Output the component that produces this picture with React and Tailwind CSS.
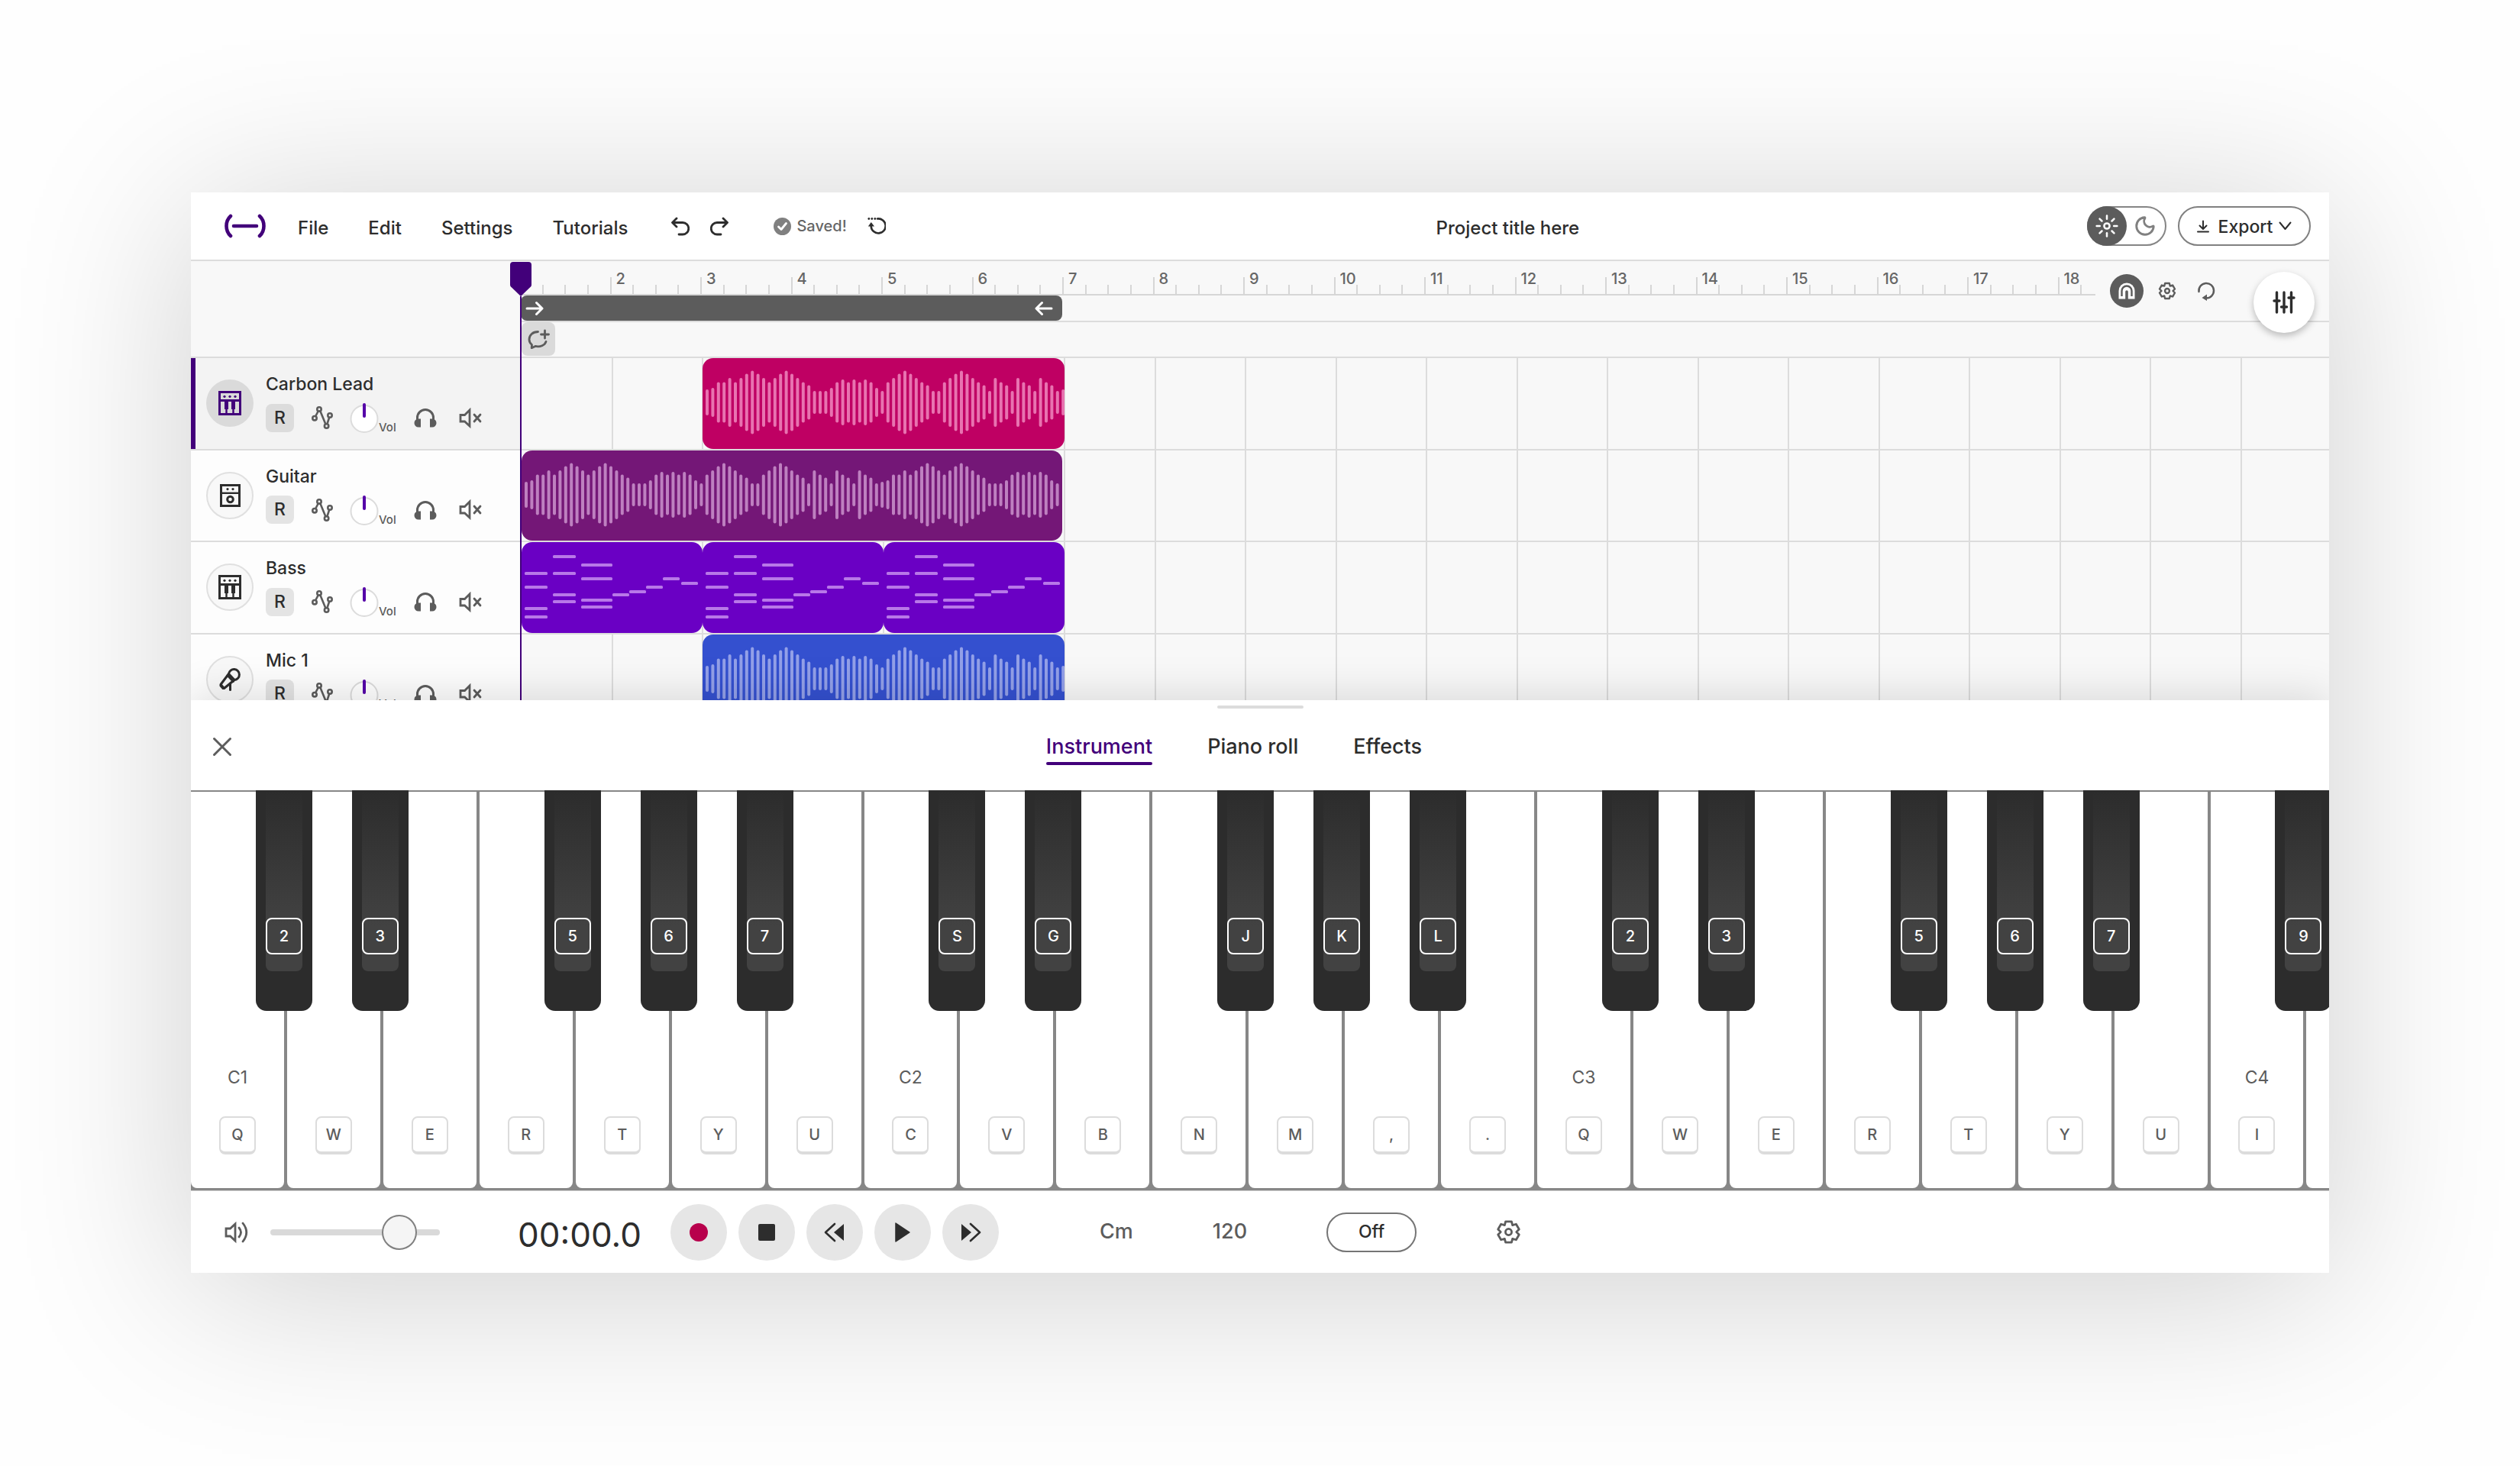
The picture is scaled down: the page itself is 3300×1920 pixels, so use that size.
import React from "react";
import { Moon } from "lucide-react";

const LEVELS = [
  34, 38, 53, 53, 64, 53, 64, 75, 83, 75, 64, 53, 64, 75, 83, 75, 64, 53, 45, 30, 30, 30, 38, 53, 60, 53, 60, 53, 60,
  53, 38, 30, 53, 64, 75, 83, 75, 64, 53, 45, 30, 30, 53, 64, 75, 83, 75, 64, 53, 45, 30, 64, 53, 45, 30, 64, 53, 45,
  30, 64, 53, 45, 30,
];

const NOTES = [
  [4, 41, 30], [4, 59, 30], [4, 87, 30], [4, 98, 30],
  [41, 19, 30], [41, 41, 30], [41, 69, 30], [41, 78, 30],
  [78, 30, 41], [78, 48, 41], [78, 76, 41], [78, 85, 41],
  [119, 69, 22], [141, 65, 22], [163, 59, 22], [185, 48, 22], [209, 54, 22],
];

const WHITE_KEYS = [
  { k: "Q", n: "C1", b: "2" }, { k: "W", b: "3" }, { k: "E" }, { k: "R", b: "5" }, { k: "T", b: "6" },
  { k: "Y", b: "7" }, { k: "U" },
  { k: "C", n: "C2", b: "S" }, { k: "V", b: "G" }, { k: "B" }, { k: "N", b: "J" }, { k: "M", b: "K" },
  { k: ",", b: "L" }, { k: "." },
  { k: "Q", n: "C3", b: "2" }, { k: "W", b: "3" }, { k: "E" }, { k: "R", b: "5" }, { k: "T", b: "6" },
  { k: "Y", b: "7" }, { k: "U" },
  { k: "I", n: "C4", b: "9" }, {},
];

const TRACKS = [
  { name: "Carbon Lead", icon: KeysIcon, selected: true },
  { name: "Guitar", icon: AmpIcon },
  { name: "Bass", icon: KeysIcon },
  { name: "Mic 1", icon: MicIcon },
];

const GEAR = Array.from({ length: 6 }, (_, i) =>
  [[-16, 11.2], [16, 11.2], [30, 8.1]].map(([off, r]) => {
    const a = ((-90 + i * 60 + off) * Math.PI) / 180;
    return `${(12 + r * Math.cos(a)).toFixed(2)},${(12 + r * Math.sin(a)).toFixed(2)}`;
  }).join(" ")
).join(" ");

function Line({ w, h, sw = 2.5, className = "", children }) {
  return (
    <svg width={w} height={h} viewBox={`0 0 ${w} ${h}`} fill="none" stroke="currentColor" strokeWidth={sw}
      strokeLinecap="round" strokeLinejoin="round" className={`shrink-0 ${className}`} aria-hidden="true">
      {children}
    </svg>
  );
}

function Gear({ size, sw }) {
  return (
    <svg width={size} height={size} viewBox="-1 -1 26 26" fill="none" stroke="currentColor" strokeWidth={sw}
      strokeLinejoin="round" aria-hidden="true">
      <polygon points={GEAR} />
      <circle cx="12" cy="12" r="3.2" />
    </svg>
  );
}

function KeysIcon() {
  return (
    <svg width="30" height="32" viewBox="0 0 30 32" fill="none" stroke="currentColor" strokeWidth="3" aria-hidden="true">
      <rect x="1.5" y="1.5" width="27" height="29" />
      <path d="M2 12.5h26" />
      <path d="M10.5 13v11M19.5 13v11" strokeWidth="5" />
      <path d="M10.5 24v6M19.5 24v6" strokeWidth="2.4" />
      <g fill="currentColor" stroke="none">
        <circle cx="8" cy="7.3" r="1.6" /><circle cx="15" cy="7.3" r="1.6" /><circle cx="22" cy="7.3" r="1.6" />
      </g>
    </svg>
  );
}

function AmpIcon() {
  return (
    <svg width="27" height="30" viewBox="0 0 27 30" fill="none" stroke="currentColor" strokeWidth="3" aria-hidden="true">
      <rect x="1.5" y="1.5" width="24" height="27" />
      <path d="M2 11.8h23" strokeWidth="2.4" />
      <circle cx="13.5" cy="20" r="3.8" />
      <g fill="currentColor" stroke="none"><circle cx="10" cy="6.6" r="1.6" /><circle cx="17" cy="6.6" r="1.6" /></g>
    </svg>
  );
}

function MicIcon() {
  return (
    <Line w={28} h={31} sw={3}>
      <path d="M12.5 8.5 2 22.5l4.5 5L20 16.5" />
      <path d="M12.5 8.5a7 7 0 1 1 7.5 8z" />
      <path d="m11 10.5 7.5 8" />
      <path d="M14.5 21v8.5" />
      <path d="m2 24 3 3.5" />
    </Line>
  );
}

function TrackHeader({ name, icon: Icon, selected }) {
  return (
    <div className={`flex border-b-2 border-[#dcdcdc] ${selected ? "bg-[#f3f3f3]" : "bg-[#fdfdfd]"}`}>
      <div className={`w-1.5 shrink-0 ${selected ? "bg-[#42007a]" : ""}`} />
      <div className={`mt-7 ml-[14px] flex size-[62px] shrink-0 items-center justify-center rounded-full ${
        selected ? "bg-[#dadada] text-[#42007a]" : "border-2 border-[#e0e0e0] bg-[#f8f8f8] text-[#2d2d2d]"}`}>
        <Icon />
      </div>
      <div className="ml-4 pt-5">
        <div className="text-[23px] leading-7 font-medium text-[#2d2d2d]">{name}</div>
        <div className="mt-2.5 flex h-10 items-center text-[#5c5c5c]">
          <button aria-label={`Record ${name}`} className={`flex h-[37px] w-[37px] items-center justify-center rounded-lg text-[23px] font-medium text-[#2d2d2d] ${
            selected ? "bg-[#dcdcdc]" : "bg-[#e4e4e4]"}`}>R</button>
          <button aria-label="Automation" className="ml-[23px]">
            <Line w={28} h={30} sw={2.6}>
              <path d="m5.3 13 3.4-6.5M11.3 6.3l7 17M20.5 23l2.6-8" />
              <circle cx="10" cy="4" r="2.7" /><circle cx="4" cy="15.7" r="2.7" />
              <circle cx="24" cy="12" r="2.7" /><circle cx="19.6" cy="26" r="2.7" />
            </Line>
          </button>
          <button aria-label="Volume knob" className="ml-[22px] flex items-end">
            <svg width="38" height="42" viewBox="0 0 38 42" fill="none" aria-hidden="true">
              <circle cx="19" cy="22.5" r="17.5" fill="#fff" stroke="#dcdcdc" strokeWidth="2" />
              <path d="M19 4v15" stroke="#5500a8" strokeWidth="4" strokeLinecap="round" />
            </svg>
            <span className="-mb-0.5 text-[15px] leading-5 font-medium">Vol</span>
          </button>
          <button aria-label="Solo" className="ml-[23px]">
            <Line w={30} h={26} sw={3}>
              <path d="M4.5 16v-3a10.5 10.5 0 0 1 21 0v3" />
              <path d="M9 14.5v11H6a5.5 5.5 0 0 1 0-11zM21 14.5v11h3a5.5 5.5 0 0 0 0-11z" fill="currentColor" stroke="none" />
            </Line>
          </button>
          <button aria-label="Mute" className="ml-[29px]">
            <Line w={30} h={27} sw={2.8}>
              <path d="M2 9.5h5.5L14 3v21l-6.5-6H2z" strokeLinejoin="miter" />
              <path d="m20 9 8 9M28 9l-8 9" />
            </Line>
          </button>
        </div>
      </div>
    </div>
  );
}

function Wave({ count, color }) {
  return (
    <svg width={count * 7.4 + 4} height="118" aria-hidden="true" fill={color} className="max-w-none">
      {Array.from({ length: count }, (_, i) => {
        const h = LEVELS[i % LEVELS.length];
        return <rect key={i} x={4 + i * 7.4} y={58 - h / 2} width="4" height={h} rx="2" />;
      })}
    </svg>
  );
}

function Notes() {
  return (
    <svg width="237" height="118" aria-hidden="true" fill="#b878e8" className="max-w-none">
      {NOTES.map(([x, y, w], i) => <rect key={i} x={x} y={y - 2} width={w} height="4" rx="1.5" />)}
    </svg>
  );
}

function Lane({ children }) {
  return (
    <div className="grid grid-cols-20 grid-rows-1 border-b-2 border-[#dcdcdc]">
      {Array.from({ length: 20 }, (_, i) => (
        <div key={i} style={{ gridColumnStart: i + 1 }} className={`row-start-1 ${i ? "border-l-2 border-[#dcdcdc]" : ""}`} />
      ))}
      {children}
    </div>
  );
}

function Ruler() {
  return (
    <div className="-mr-0.5 grid grid-cols-20 border-b-2 border-[#d6d6d6]">
      {Array.from({ length: 20 }, (_, i) => (
        <div key={i} className="grid">
          <span className="col-start-1 row-start-1 pt-[11px] pl-1.5 text-[20px] leading-6 font-medium text-[#666]">{i > 0 && i < 18 && i + 1}</span>
          <div className="col-start-1 row-start-1 grid grid-cols-4 items-end">
            <i className="h-3 border-r-2 border-[#d6d6d6]" /><i className="h-3 border-r-2 border-[#d6d6d6]" />
            <i className="h-3 border-r-2 border-[#d6d6d6]" /><i className="h-[22px] border-r-2 border-[#d6d6d6]" />
          </div>
        </div>
      ))}
    </div>
  );
}

function Header() {
  return (
    <header className="flex h-[90px] items-center border-b-2 border-[#dcdcdc] bg-white pr-6 pl-11 text-[#2d2d2d]">
      <a href="#home" aria-label="Home" className="text-[#42007a]">
        <Line w={54} h={32} sw={4.6}>
          <path d="M8 3Q2.500 8 2.500 16T8 29M46 3q5.500 5 5.500 13T46 29M12 16h30" />
        </Line>
      </a>
      <nav className="ml-[42px] flex gap-[52px] pt-1.5 text-[24px] font-medium">
        {["File", "Edit", "Settings", "Tutorials"].map((t) => <button key={t}>{t}</button>)}
      </nav>
      <button aria-label="Undo" className="ml-[56px]">
        <Line w={25} h={25} sw={2.8}><path d="M8 2 2.5 7.5 8 13M3 7.5h13a7.75 7.75 0 0 1 0 15.5h-5" /></Line>
      </button>
      <button aria-label="Redo" className="ml-[27px]">
        <Line w={25} h={25} sw={2.8}><path d="m17 2 5.5 5.5L17 13M22 7.5H9A7.75 7.75 0 0 0 9 23h5" /></Line>
      </button>
      <div className="ml-[58px] flex items-center gap-[7px] text-[20px] font-medium text-[#666]">
        <svg width="23" height="23" viewBox="0 0 23 23" fill="none" aria-hidden="true">
          <circle cx="11.5" cy="11.5" r="11.5" fill="#808080" />
          <path d="m6.5 12 3.5 3.5 6.5-8" stroke="#fff" strokeWidth="2.8" strokeLinecap="round" strokeLinejoin="round" />
        </svg>
        <span>Saved!</span>
      </div>
      <button aria-label="Version history" className="ml-[27px]">
        <Line w={24} h={24} sw={2.6}>
          <path d="M13 2.5a9.5 9.5 0 1 1-8.300 10" />
          <g fill="currentColor" stroke="none">
            <path d="M.8 12.5 4.8 7l4.2 5.5z" />
            <circle cx="1.8" cy="2.5" r="1.4" /><circle cx="5.8" cy="2.5" r="1.4" /><circle cx="9.8" cy="2.5" r="1.4" />
          </g>
        </Line>
      </button>
      <h1 className="flex-1 pt-1.5 pl-[56px] text-center text-[24px] font-medium">Project title here</h1>
      <div className="flex h-[52px] w-[104px] shrink-0 rounded-full border-2 border-[#858585]">
        <button aria-label="Light theme" aria-pressed="true" className="-m-0.5 flex size-[52px] items-center justify-center rounded-full bg-[#5c5c5c] text-white">
          <Line w={30} h={30} sw={2.5}>
            <circle cx="15" cy="15" r="3.6" />
            {[0, 45, 90, 135, 180, 225, 270, 315].map((a) => <path key={a} d="M15 1.6v4.2" transform={`rotate(${a} 15 15)`} />)}
          </Line>
        </button>
        <button aria-label="Dark theme" aria-pressed="false" className="flex flex-1 items-center justify-center text-[#808080]">
          <Moon size={30} strokeWidth={2.3} />
        </button>
      </div>
      <button className="ml-[15px] flex h-[52px] w-[174px] shrink-0 items-center justify-center rounded-full border-2 border-[#808080] text-[23px] font-medium">
        <Line w={16} h={17} sw={2}><path d="M8 1.5v10M3.5 7.5 8 12l4.5-4.5M1 15.5h14" /></Line>
        <span className="mr-2 ml-3 pt-0.5">Export</span>
        <Line w={17} h={12} sw={2}><path d="m1.5 1.5 7 8.5 7-8.5" /></Line>
      </button>
    </header>
  );
}

function Arrow({ className = "" }) {
  return <Line w={24} h={20} sw={3} className={className}><path d="M2 10h19M14.5 2.5 22 10l-7.5 7.5" /></Line>;
}

function Timeline() {
  const clip = "row-start-1 -mr-px ml-px overflow-hidden rounded-[14px]";
  return (
    <section className="relative flex h-[575px] overflow-hidden">
      <div className="w-[432px] shrink-0">
        <div className="h-[127px] border-b-2 border-[#dcdcdc] bg-[#f8f8f8]" />
        <div className="grid h-[482px] grid-rows-4">
          {TRACKS.map((t) => <TrackHeader key={t.name} {...t} />)}
        </div>
      </div>
      <div className="min-w-0 flex-1 overflow-hidden bg-[#f8f8f8]">
        <div className="grid">
          <div className="col-start-1 row-start-1 grid grid-rows-[45px_35px]">
            <Ruler />
            <div className="-mr-0.5 grid grid-cols-20 border-b-2 border-[#dcdcdc]">
              <div className="col-span-6 mr-0.5 flex items-center justify-between rounded-lg bg-[#5c5c5c] pr-3 pl-1.5 text-white">
                <Arrow /><Arrow className="-scale-x-100" />
              </div>
            </div>
          </div>
          <div className="col-start-1 row-start-1 mb-0.5 flex w-[306px] items-start gap-[19px] justify-self-end bg-[#f8f8f8] pt-[17px] pl-[19px] text-[#5c5c5c]">
            <button aria-label="Snap to grid" className="flex size-11 items-center justify-center rounded-full bg-[#5c5c5c] text-white">
              <svg width="22" height="22" viewBox="0 0 22 22" fill="none" aria-hidden="true">
                <path d="M.5 21.500V11a10.500 10.500 0 0 1 21 0v10.500z" fill="#fff" />
                <path d="M4.500 18v-7a6.500 6.500 0 0 1 13 0v7" stroke="#5c5c5c" strokeWidth="2.4" />
                <path d="M11 21.500V12" stroke="#5c5c5c" strokeWidth="3.6" strokeLinecap="round" />
              </svg>
            </button>
            <button aria-label="Grid settings" className="mt-2.5"><Gear size={24} sw={2.6} /></button>
            <button aria-label="Loop" className="mt-2.5 ml-2">
              <Line w={24} h={26} sw={2.5}>
                <path d="M2.5 13A9.8 9.8 0 1 1 12 21.500" />
                <path d="m13 16.5-6.5 4.5 6.5 4z" fill="currentColor" stroke="none" />
              </Line>
            </button>
          </div>
        </div>
        <div className="h-[47px] border-b-2 border-[#dcdcdc]">
          <button aria-label="Add comment" className="ml-px flex size-11 items-center justify-center rounded-lg bg-[#dadada] text-[#5c5c5c]">
            <Line w={29} h={26} sw={2.8}>
              <path d="M13.5 3.500C6.500 3.500 2 8 2 13.500c0 2.800 1.300 5.200 3.500 7l-.3 4.200 4.800-2.300c6.500 1.400 12.500-1.200 14-6" />
              <path d="M22.5 2v10M17.5 7h10" />
            </Line>
          </button>
        </div>
        <div className="-mr-0.5 grid h-[482px] grid-rows-4">
          <Lane>
            <div className={`${clip} col-span-4 col-start-3 bg-[#bf0063]`}><Wave count={64} color="#e873b0" /></div>
          </Lane>
          <Lane>
            <div className="col-span-6 col-start-1 row-start-1 mr-0.5 ml-px overflow-hidden rounded-[14px] bg-[#741777]"><Wave count={95} color="#be80c0" /></div>
          </Lane>
          <Lane>
            {["col-start-1", "col-start-3", "col-start-5"].map((c) => (
              <div key={c} className={`${clip} ${c} col-span-2 bg-[#6a00c4]`}><Notes /></div>
            ))}
          </Lane>
          <Lane>
            <div className={`${clip} col-span-4 col-start-3 bg-[#3450cf]`}><Wave count={64} color="#93a0e8" /></div>
          </Lane>
        </div>
      </div>
      <div className="absolute inset-y-0 left-[418px] flex w-7 flex-col items-center">
        <svg width="28" height="46" viewBox="0 0 28 46" fill="#42007a" className="shrink-0" aria-hidden="true">
          <path d="M4 1h20a4 4 0 0 1 4 4v26q0 1.5-1 2.5L14 46 1 33.5q-1-1-1-2.5V5a4 4 0 0 1 4-4z" />
        </svg>
        <div className="w-0.5 flex-1 bg-[#42007a]" />
      </div>
      <button aria-label="Mixer" className="absolute top-3.5 right-[19px] flex size-20 items-center justify-center rounded-full bg-white text-[#2d2d2d] shadow-[0_4px_10px_rgba(0,0,0,0.25)]">
        <Line w={30} h={30} sw={3.4}>
          <path d="M5.5 2v26M15 2v26M24.5 2v26M2 13h7M11.5 21h7M21 9h7" />
        </Line>
      </button>
    </section>
  );
}

function Keyboard() {
  return (
    <div className="overflow-hidden border-b border-[#d0d0d0] bg-[#878787] pt-0.5 pb-[3px]">
      <div className="grid h-[519px] w-[103.3%] grid-cols-23 gap-1">
        {WHITE_KEYS.map(({ k, n, b }, i) => (
          <div key={i} className="relative">
            <button className="flex size-full flex-col items-center justify-end rounded-b-lg bg-white pb-11 text-[#5c5c5c]">
              {n && <span className="mb-[37px] text-[23px] leading-7">{n}</span>}
              {k && <kbd className="flex h-[50px] w-12 items-center justify-center rounded-lg border-2 border-b-4 border-[#dcdcdc] font-[Inter,sans-serif] text-[20px] font-medium">{k}</kbd>}
            </button>
            {b && (
              <button className="absolute -top-0.5 -right-[37px] z-10 h-[289px] w-[74px] rounded-b-[14px] bg-[#2c2c2c] px-[13px] pb-[52px] text-white">
                <span className="flex h-full flex-col justify-end rounded-b-lg bg-linear-to-b from-[#2c2c2c] to-[#424242] to-75% pb-[22px]">
                  <kbd className="flex h-12 items-center justify-center rounded-lg border-2 border-white font-[Inter,sans-serif] text-[20px] font-medium">{b}</kbd>
                </span>
              </button>
            )}
          </div>
        ))}
      </div>
    </div>
  );
}

function Drawer() {
  return (
    <section className="relative bg-white shadow-[0_-8px_50px_rgba(0,0,0,0.12)]">
      <div className="flex h-[118px] flex-col">
        <div className="mx-auto mt-[7px] h-1 w-[113px] rounded-full bg-[#dcdcdc]" />
        <div className="flex flex-1 items-center pr-[122px] pb-2 pl-7">
          <button aria-label="Close" className="text-[#5c5c5c]">
            <Line w={26} h={26} sw={3}><path d="m2.500 2.500 21 21M23.500 2.500l-21 21" /></Line>
          </button>
          <div role="tablist" className="mx-auto flex gap-[72px] text-[27px] leading-8 font-medium text-[#2d2d2d]">
            <button role="tab" aria-selected="true" className="relative text-[#42007a]">
              Instrument
              <span className="absolute inset-x-0 -bottom-2 h-1 rounded-full bg-[#42007a]" />
            </button>
            <button role="tab" aria-selected="false">Piano roll</button>
            <button role="tab" aria-selected="false">Effects</button>
          </div>
        </div>
      </div>
      <Keyboard />
    </section>
  );
}

function Transport() {
  const btn = "flex size-[74px] items-center justify-center rounded-full bg-[#e6e6e6] text-[#2d2d2d]";
  return (
    <footer className="relative flex h-[107px] items-center bg-white pl-11 text-[#5c5c5c]">
      <Line w={31} h={30} sw={2.8}>
        <path d="M2 10h5.500L14 4v22l-6.500-6H2z" strokeLinejoin="miter" />
        <path d="M19 9q5 6 0 12M24 3q9.500 12 0 24" />
      </Line>
      <input type="range" aria-label="Master volume" defaultValue="83" min="0" max="100"
        className="ml-[29px] h-12 w-[222px] appearance-none bg-transparent [&::-webkit-slider-runnable-track]:h-2 [&::-webkit-slider-runnable-track]:rounded-full [&::-webkit-slider-runnable-track]:bg-[#d9d9d9] [&::-webkit-slider-thumb]:-mt-[19px] [&::-webkit-slider-thumb]:size-[46px] [&::-webkit-slider-thumb]:appearance-none [&::-webkit-slider-thumb]:rounded-full [&::-webkit-slider-thumb]:border-2 [&::-webkit-slider-thumb]:border-[#808080] [&::-webkit-slider-thumb]:bg-[#f5f5f5]" />
      <output className="ml-[102px] w-[200px] pt-1.5 text-[44px] leading-none text-[#2d2d2d]">00:00.0</output>
      <div className="flex gap-[15px]">
        <button aria-label="Record" className={btn}><span className="size-6 rounded-full bg-[#b8004c]" /></button>
        <button aria-label="Stop" className={btn}><span className="size-[22px] rounded-xs bg-[#2d2d2d]" /></button>
        <button aria-label="Rewind" className={btn}>
          <Line w={28} h={26} sw={2.6}><path d="M14 2 2 13l12 11" /><path d="M26 2v22L13 13z" fill="currentColor" stroke="none" /></Line>
        </button>
        <button aria-label="Play" className={btn}>
          <Line w={22} h={28} sw={1.5}><path d="M2 2v24l18-12z" fill="currentColor" /></Line>
        </button>
        <button aria-label="Fast forward" className={btn}>
          <Line w={28} h={26} sw={2.6}><path d="m14 2 12 11-12 11" /><path d="M2 2v22l13-11z" fill="currentColor" stroke="none" /></Line>
        </button>
      </div>
      <div className="ml-[132px] flex items-center gap-[104px] text-[27px] font-medium">
        <button>Cm</button>
        <button>120</button>
        <button className="h-[52px] w-[118px] rounded-full border-2 border-[#757575] text-[23px] text-[#2d2d2d]">Off</button>
        <button aria-label="Settings"><Gear size={33} sw={2.2} /></button>
      </div>
    </footer>
  );
}

export default function App() {
  return (
    <div className="min-h-screen bg-[#fefefe] px-[250px] py-[252px] font-[Inter,sans-serif]">
      <main className="shadow-[0_22px_220px_rgba(0,0,0,0.19)]">
        <div className="overflow-hidden bg-white">
          <Header />
          <Timeline />
          <Drawer />
          <Transport />
        </div>
      </main>
    </div>
  );
}
